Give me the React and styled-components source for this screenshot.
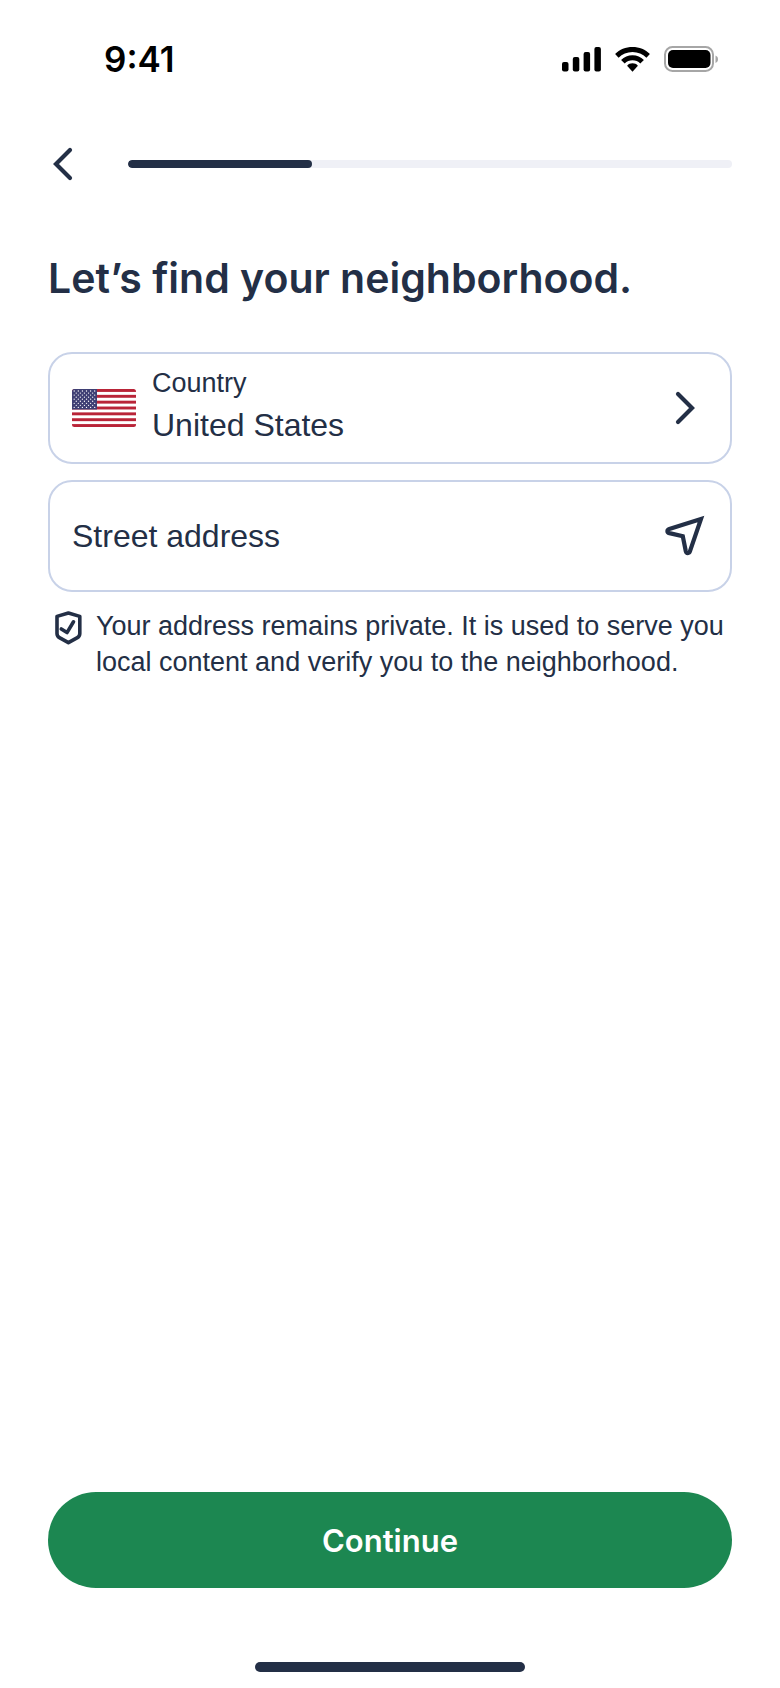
import { useState } from "react"
import styled, { createGlobalStyle } from "styled-components"

const INK = "#232f46"

const GlobalStyle = createGlobalStyle`
    * {
        box-sizing: border-box;
    }

    body {
        margin: 0;
        background-color: #ffffff;
        color: ${INK};
        font-family: "Liberation Sans", Arial, sans-serif;
    }
`

const Screen = styled.div`
    display: flex;
    flex-direction: column;
    min-height: 100vh;
`

const StatusBar = styled.div`
    display: flex;
    align-items: center;
    justify-content: space-between;
    height: 118px;
    padding: 0 62px 0 104px;
    color: #000000;
`

const Time = styled.span`
    font-family: "Inter", sans-serif;
    font-size: 35px;
    font-weight: 600;
    line-height: 40px;
`

const StatusIcons = styled.div`
    display: flex;
    align-items: center;
    gap: 14px;

    svg {
        display: block;
    }
`

const Header = styled.header`
    display: flex;
    align-items: center;
    gap: 36px;
    height: 92px;
    padding: 0 48px;
`

const IconButton = styled.button`
    display: flex;
    flex-shrink: 0;
    padding: 0;
    border: none;
    background-color: transparent;
    color: inherit;
    cursor: pointer;
`

const Track = styled.div`
    flex: 1;
    height: 8px;
    border-radius: 4px;
    background-color: #eff0f6;
    overflow: hidden;
`

const Fill = styled.div`
    height: 100%;
    border-radius: 4px;
    background-color: ${INK};
`

const Main = styled.main`
    display: flex;
    flex-direction: column;
    gap: 16px;
    padding: 40px 48px;
`

const Title = styled.h1`
    margin: 0 0 30px;
    font-family: "Inter", sans-serif;
    font-size: 41px;
    font-weight: 600;
    line-height: 56px;
`

const Card = styled.div`
    display: flex;
    align-items: center;
    gap: 16px;
    width: 100%;
    height: 112px;
    padding: 0 22px;
    border: 2px solid #c8d2e8;
    border-radius: 24px;
    background-color: #ffffff;
    color: inherit;
    font: inherit;
    text-align: left;
`

const CardText = styled.span`
    display: flex;
    flex: 1;
    flex-direction: column;
`

const CardLabel = styled.span`
    font-size: 27px;
    line-height: 34px;
`

const CardValue = styled.span`
    font-size: 32px;
    line-height: 50px;
`

const AddressInput = styled.input`
    flex: 1;
    min-width: 0;
    height: 48px;
    padding: 0;
    border: none;
    outline: none;
    background-color: transparent;
    color: inherit;
    font-family: inherit;
    font-size: 32px;

    &::placeholder {
        color: ${INK};
        opacity: 1;
    }
`

const Note = styled.div`
    display: flex;
    align-items: flex-start;
    gap: 12px;
    padding-left: 4px;

    svg {
        flex-shrink: 0;
    }
`

const NoteText = styled.p`
    margin: 0;
    font-size: 27px;
    line-height: 36px;
`

const Footer = styled.footer`
    display: flex;
    flex-direction: column;
    align-items: center;
    gap: 74px;
    margin-top: auto;
    padding: 0 48px 16px;
`

const ContinueButton = styled.button`
    width: 100%;
    height: 96px;
    border: none;
    border-radius: 48px;
    background-color: #1c8751;
    color: #ffffff;
    font-family: "Inter", sans-serif;
    font-size: 31px;
    font-weight: 600;
    cursor: pointer;
`

const HomeIndicator = styled.div`
    width: 270px;
    height: 10px;
    border-radius: 5px;
    background-color: ${INK};
`

function SignalIcon() {
    return (
        <svg width="39" height="26" viewBox="0 0 39 26" fill="currentColor">
            <rect x="0" y="16" width="6.5" height="9.5" rx="2" />
            <rect x="10.8" y="11" width="6.5" height="14.5" rx="2" />
            <rect x="21.6" y="6" width="6.5" height="19.5" rx="2" />
            <rect x="32.4" y="1" width="6.5" height="24.5" rx="2" />
        </svg>
    )
}

function WifiIcon() {
    return (
        <svg width="35" height="26" viewBox="0 0 35 26" fill="currentColor">
            <path d="M17.5 1C24.3 1 30.5 3.6 34.9 8L31.4 11.7C27.8 8.1 22.9 6 17.5 6S7.2 8.1 3.6 11.7L.1 8C4.5 3.6 10.7 1 17.5 1Z" />
            <path d="M17.5 9.3C21.9 9.3 25.9 11 28.9 13.9L25.3 17.5C23.2 15.5 20.5 14.3 17.5 14.3S11.8 15.5 9.7 17.5L6.1 13.9C9.1 11 13.1 9.3 17.5 9.3Z" />
            <path d="M17.5 17.3C19.6 17.3 21.5 18.1 22.9 19.7L17.5 25.8L12.1 19.7C13.5 18.1 15.4 17.3 17.5 17.3Z" />
        </svg>
    )
}

function BatteryIcon() {
    return (
        <svg width="54" height="26" viewBox="0 0 54 26" fill="currentColor">
            <rect x="1" y="1" width="48" height="24" rx="7.5" fill="none" stroke="#a6a6a6" strokeWidth="2" />
            <rect x="4" y="4" width="42.5" height="18" rx="5" />
            <path d="M51.5 9.5C53.3 10.3 54 11.6 54 13.2S53.3 16.1 51.5 17Z" fill="#a6a6a6" />
        </svg>
    )
}

function ChevronIcon({ left }) {
    return (
        <svg width="44" height="44" viewBox="0 0 44 44" fill="none" stroke="currentColor" strokeWidth="4.2" strokeLinecap="round">
            <path d={left ? "M22 8L8 22L22 36" : "M14 8L28 22L14 36"} />
        </svg>
    )
}

function LocateIcon() {
    return (
        <svg width="44" height="44" viewBox="0 0 44 44" fill="none" stroke="currentColor" strokeWidth="4.2">
            <path d="M37 5L5.3 14.9C2.7 15.8 2.8 18.4 5.4 19.1L18.8 22.3L21.8 37.2C22.4 39.6 25.2 39.7 26 37.2Z" />
        </svg>
    )
}

function ShieldIcon() {
    return (
        <svg width="32" height="40" viewBox="0 0 32 40" fill="none" stroke="currentColor" strokeWidth="3.6" strokeLinejoin="round" strokeLinecap="round">
            <path d="M16.4 5L27.8 8.4V25.4Q27.8 28.2 25.4 29.6L16.4 34.6L7.4 29.6Q5 28.2 5 25.4V8.4Z" />
            <path d="M9.3 21L15 24.6L21.5 13.8" />
        </svg>
    )
}

function FlagIcon() {
    const stripes = [0, 2, 4, 6, 8, 10, 12]
    const rows = [0, 1, 2, 3, 4, 5, 6, 7, 8]
    const stripe = 38 / 13

    return (
        <svg width="64" height="38" viewBox="0 0 64 38">
            <clipPath id="flag">
                <rect width="64" height="38" rx="2.5" />
            </clipPath>
            <g clipPath="url(#flag)">
                <rect width="64" height="38" fill="#ffffff" />
                {stripes.map((i) => (
                    <rect key={i} y={i * stripe} width="64" height={stripe} fill="#b92438" />
                ))}
                <rect width="25" height={7 * stripe} fill="#3f3f74" />
                {rows.map((row) =>
                    Array.from({ length: row % 2 ? 5 : 6 }, (_, col) => (
                        <circle
                            key={`${row}-${col}`}
                            cx={2.2 + col * 4.1 + (row % 2) * 2.05}
                            cy={2 + row * 2.05}
                            r="0.65"
                            fill="#ffffff"
                        />
                    ))
                )}
            </g>
        </svg>
    )
}

export default function App() {
    const [address, setAddress] = useState("")
    const progress = 30.5

    return (
        <Screen>
            <GlobalStyle />

            <StatusBar>
                <Time>9:41</Time>
                <StatusIcons>
                    <SignalIcon />
                    <WifiIcon />
                    <BatteryIcon />
                </StatusIcons>
            </StatusBar>

            <Header>
                <IconButton type="button" aria-label="Back">
                    <ChevronIcon left />
                </IconButton>
                <Track role="progressbar" aria-label="Sign up progress" aria-valuenow={progress}>
                    <Fill style={{ width: `${progress}%` }} />
                </Track>
            </Header>

            <Main>
                <Title>Let’s find your neighborhood.</Title>

                <Card as="button" type="button">
                    <FlagIcon />
                    <CardText>
                        <CardLabel>Country</CardLabel>
                        <CardValue>United States</CardValue>
                    </CardText>
                    <ChevronIcon />
                </Card>

                <Card>
                    <AddressInput
                        type="text"
                        aria-label="Street address"
                        placeholder="Street address"
                        value={address}
                        onChange={(e) => setAddress(e.target.value)}
                    />
                    <IconButton type="button" aria-label="Use my location">
                        <LocateIcon />
                    </IconButton>
                </Card>

                <Note>
                    <ShieldIcon />
                    <NoteText>
                        Your address remains private. It is used to serve you local content and verify you to the neighborhood.
                    </NoteText>
                </Note>
            </Main>

            <Footer>
                <ContinueButton type="button">Continue</ContinueButton>
                <HomeIndicator />
            </Footer>
        </Screen>
    )
}
